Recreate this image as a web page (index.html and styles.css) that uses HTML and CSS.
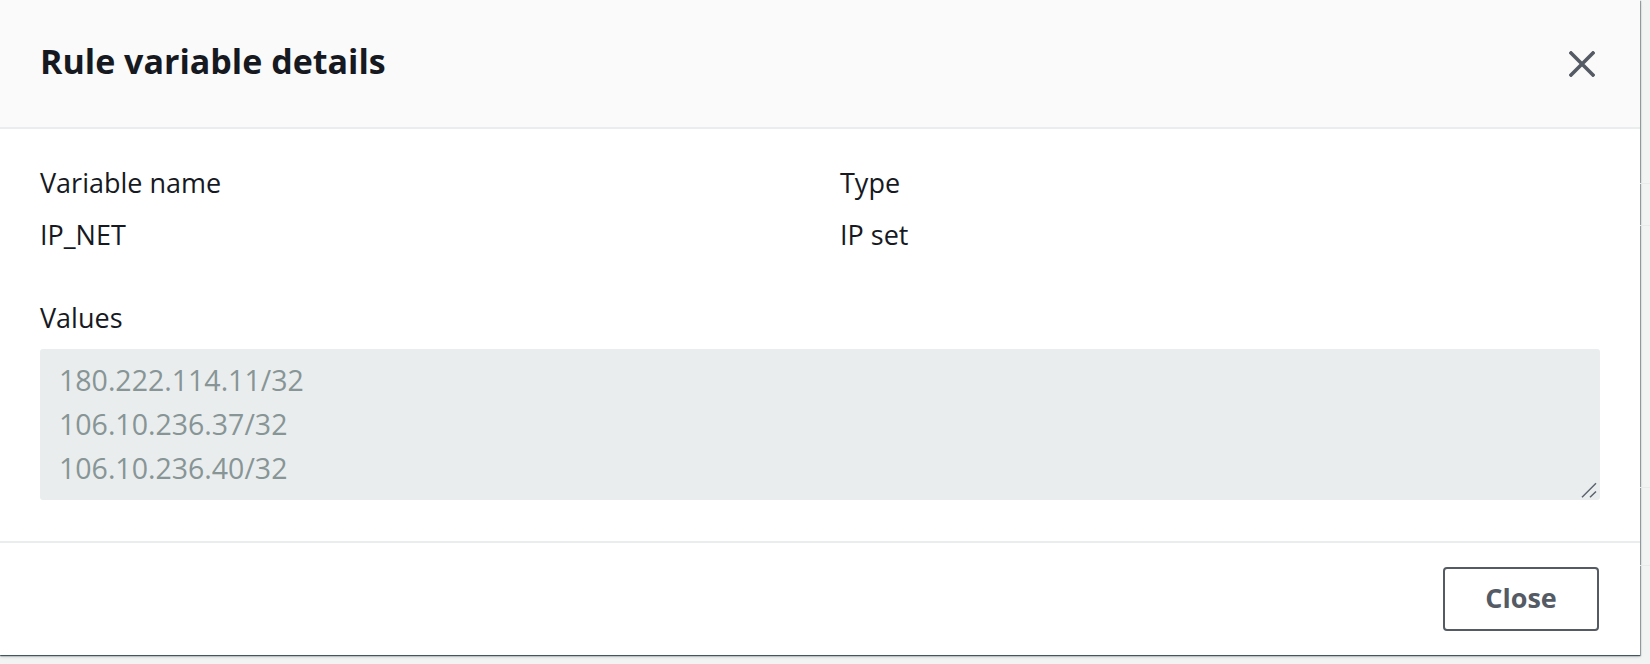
FILE: index.html
```html
<!DOCTYPE html>
<html lang="en">
<head>
<meta charset="utf-8">
<title>Rule variable details</title>
<link rel="stylesheet" href="styles.css">
</head>
<body>
<div class="page">
  <div class="modal" role="dialog" aria-labelledby="modal-title">
    <div class="modal-header">
      <h2 id="modal-title" class="modal-title">Rule variable details</h2>
      <button class="icon-btn" aria-label="Close">
        <svg width="26" height="26" viewBox="0 0 26 26" aria-hidden="true">
          <path d="M2 2 L24 24 M24 2 L2 24" stroke="#545b64" stroke-width="3.6" fill="none" stroke-linecap="square"/>
        </svg>
      </button>
    </div>
    <div class="modal-body">
      <div class="columns">
        <div class="field">
          <div class="label">Variable name</div>
          <div class="value">IP_NET</div>
        </div>
        <div class="field">
          <div class="label">Type</div>
          <div class="value">IP set</div>
        </div>
      </div>
      <div class="values-field">
        <div class="label">Values</div>
        <div class="textarea-wrap">
          <textarea class="values" rows="3" readonly>180.222.114.11/32
106.10.236.37/32
106.10.236.40/32</textarea>
          <svg class="resize-grip" width="16" height="16" viewBox="0 0 16 16" aria-hidden="true">
            <path d="M1 15.3 L15 1.3 M9 15.3 L15 9.5" stroke="#5b6370" stroke-width="1.5" fill="none"/>
          </svg>
        </div>
      </div>
    </div>
    <div class="modal-footer">
      <button class="btn">Close</button>
    </div>
  </div>
  <div class="backdrop-strip">
    <div class="strip-row r1"></div>
    <div class="strip-row r2"></div>
    <div class="strip-row r3"></div>
    <div class="strip-row r4"></div>
  </div>
</div>
</body>
</html>
```
FILE: styles.css
```css
html, body {
  margin: 0;
  padding: 0;
  background: #f2f3f3;
  font-family: "Open Sans", "Noto Sans", "Liberation Sans", sans-serif;
  color: #16191f;
}

.page {
  display: flex;
  align-items: flex-start;
  width: 1650px;
  height: 664px;
  overflow: hidden;
}

.modal {
  width: 1640px;
  height: 655px;
  flex: none;
  display: flex;
  flex-direction: column;
  background: #ffffff;
  box-shadow: 0 1px 1px rgba(0, 28, 36, 0.55), 1px 1px 1px rgba(0, 28, 36, 0.3), 0 2px 3px rgba(0, 28, 36, 0.15);
}

.modal-header {
  height: 127px;
  flex: none;
  display: flex;
  align-items: center;
  justify-content: space-between;
  padding: 0 45px 0 40px;
  background: #fafafa;
  border-bottom: 2px solid #eaeded;
}

.modal-title {
  margin: 0;
  font-size: 34px;
  font-weight: 700;
  line-height: 42px;
  color: #16191f;
  padding-bottom: 6px;
}

.icon-btn {
  width: 26px;
  height: 26px;
  padding: 0;
  border: 0;
  background: transparent;
  display: flex;
}

.modal-body {
  flex: 1;
  padding: 36px 40px 0 40px;
}

.columns {
  display: grid;
  grid-template-columns: 1fr 1fr;
  column-gap: 40px;
}

.field {
  display: flex;
  flex-direction: column;
  gap: 16px;
}

.label, .value {
  font-size: 27px;
  line-height: 36px;
  color: #16191f;
}

.values-field {
  margin-top: 47px;
  display: flex;
  flex-direction: column;
  gap: 13px;
}

.textarea-wrap {
  position: relative;
}

.values {
  display: block;
  box-sizing: border-box;
  width: 100%;
  height: 151px;
  margin: 0;
  padding: 9px 20px 10px 19px;
  border: 0;
  border-radius: 3px;
  background: #eaeded;
  font-family: "Open Sans", "Noto Sans", "Liberation Sans", sans-serif;
  font-size: 28.5px;
  line-height: 44px;
  color: #879596;
  outline: none;
  resize: none;
  overflow: hidden;
}

.resize-grip {
  position: absolute;
  right: 3px;
  bottom: 2px;
  pointer-events: none;
}

.modal-footer {
  flex: none;
  height: 114px;
  box-sizing: border-box;
  border-top: 2px solid #eaeded;
  display: flex;
  justify-content: flex-end;
  align-items: flex-start;
  padding: 24px 41px 0 0;
}

.btn {
  width: 156px;
  height: 64px;
  box-sizing: border-box;
  border: 2px solid #545b64;
  border-radius: 4px;
  background: #ffffff;
  color: #545b64;
  font-family: "Open Sans", "Noto Sans", "Liberation Sans", sans-serif;
  font-size: 27px;
  font-weight: 700;
  line-height: 36px;
  padding: 0 0 3px 0;
}

.backdrop-strip {
  flex: 1;
  display: flex;
  flex-direction: column;
}

.strip-row {
  border-bottom: 1px solid #e9ebeb;
}

.r1 { height: 183px; }
.r2 { height: 41px; }
.r3 { height: 261px; }
.r4 { height: 77px; }
```
